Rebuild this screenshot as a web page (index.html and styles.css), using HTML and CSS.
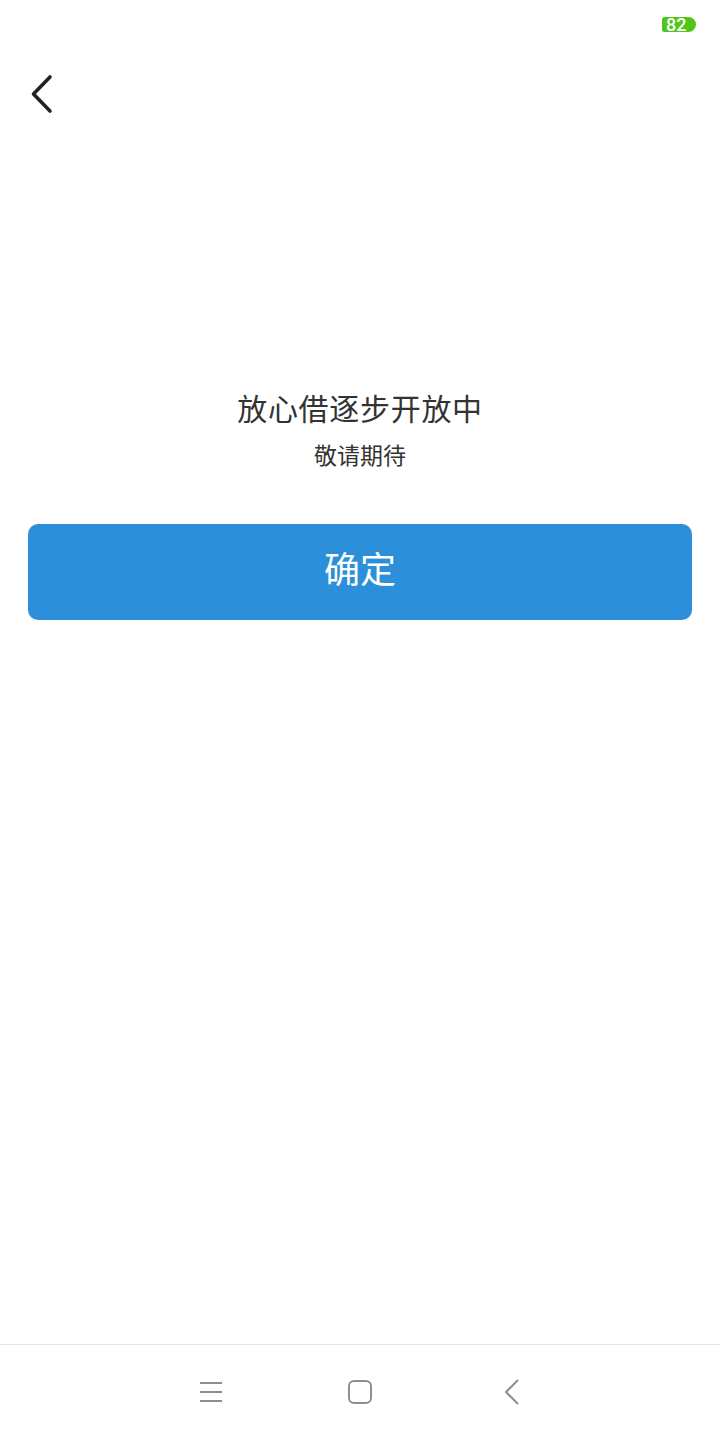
FILE: index.html
```html
<!DOCTYPE html>
<html lang="zh-CN">
<head>
    <meta charset="UTF-8">
    <meta name="viewport" content="width=device-width, initial-scale=1.0">
    <title>放心借</title>
    <link rel="stylesheet" href="styles.css">
</head>
<body>
    <div class="status-bar">
        <div class="battery">82</div>
    </div>
    <div class="top-bar">
        <svg class="back-icon" width="24" height="40" viewBox="0 0 24 40">
            <path d="M21 3 L4.5 20 L21 37" fill="none" stroke="#222" stroke-width="3.6" stroke-linecap="round" stroke-linejoin="round"/>
        </svg>
    </div>
    <main class="content">
        <h1 class="title">放心借逐步开放中</h1>
        <p class="subtitle">敬请期待</p>
        <button class="confirm">确定</button>
    </main>
    <nav class="nav-bar">
        <svg width="22" height="24" viewBox="0 0 22 24">
            <path d="M0 3 H22 M0 12 H22 M0 21 H22" stroke="#8e8e8e" stroke-width="2" fill="none"/>
        </svg>
        <svg width="24" height="24" viewBox="0 0 24 24">
            <rect x="1" y="1" width="22" height="22" rx="5" fill="none" stroke="#8e8e8e" stroke-width="2"/>
        </svg>
        <svg class="nav-back" width="14" height="26" viewBox="0 0 14 26">
            <path d="M13 1 L1 13 L13 25" fill="none" stroke="#8e8e8e" stroke-width="2"/>
        </svg>
    </nav>
</body>
</html>
```

FILE: styles.css
```css
* {
    box-sizing: border-box;
}
html, body {
    height: 100%;
}
body {
    margin: 0;
    display: flex;
    flex-direction: column;
    background-color: #fff;
    font-family: "Roboto", "Noto Sans CJK SC", sans-serif;
    color: #333;
}
.status-bar {
    height: 50px;
    padding: 17px 24px 0 0;
    display: flex;
    justify-content: flex-end;
    align-items: flex-start;
}
.battery {
    width: 34px;
    height: 15px;
    padding-left: 4px;
    background-color: #52c41a;
    border-radius: 3px 8px 8px 3px;
    color: #fff;
    font-size: 18px;
    font-weight: 500;
    line-height: 16px;
}
.top-bar {
    height: 86px;
    padding: 24px 0 0 29px;
}
.back-icon {
    display: block;
}
.content {
    flex: 1;
    padding: 251px 28px 0;
    text-align: center;
}
.title {
    margin: 0;
    font-size: 30px;
    font-weight: 400;
    line-height: 46px;
    letter-spacing: 0.7px;
}
.subtitle {
    margin: 7px 0 50px;
    font-size: 23px;
    line-height: 34px;
}
.confirm {
    display: block;
    width: 100%;
    height: 96px;
    padding: 0 0 10px;
    border: none;
    border-radius: 10px;
    background-color: #2b90d9;
    color: #fff;
    font-family: inherit;
    font-size: 36px;
}
.nav-bar {
    height: 96px;
    padding: 0 1px 1px 0;
    border-top: 1px solid #e4e4e4;
    display: flex;
    justify-content: center;
    align-items: center;
    gap: 126px;
}
.nav-back {
    margin-left: 7px;
}
```
